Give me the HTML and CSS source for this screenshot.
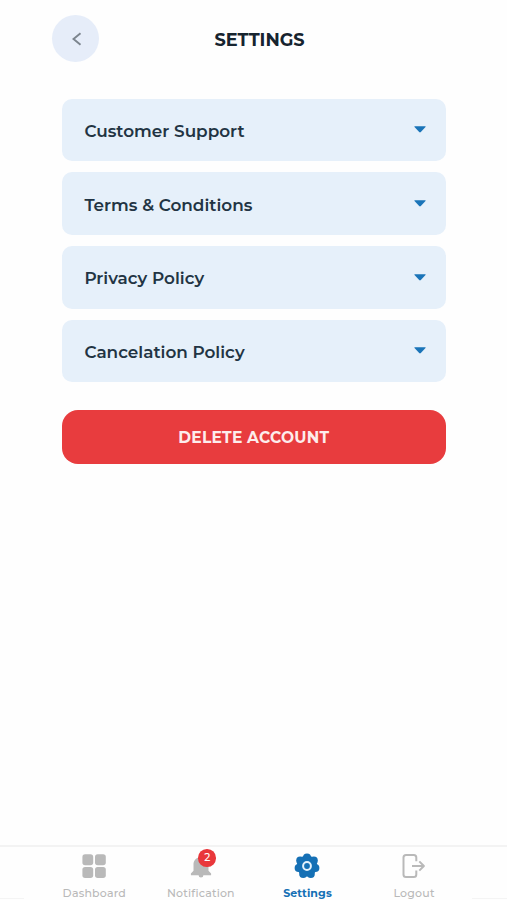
FILE: index.html
```html
<!DOCTYPE html>
<html lang="en">
<head>
<meta charset="utf-8">
<title>Settings</title>
<link rel="stylesheet" href="styles.css">
</head>
<body>
<div class="screen">
  <header class="header">
    <button class="back" aria-label="Back"><svg width="10" height="14" viewBox="0 0 10 14"><path d="M8.5 1.2 1.5 7l7 5.8" fill="none" stroke="#7c858e" stroke-width="1.9"/></svg></button>
    <h1 class="title">SETTINGS</h1>
  </header>
  <main class="content">
    <section class="list">
      <div class="card"><span>Customer Support</span><svg class="caret" viewBox="0 0 12 7"><path d="M.8.3h10.4q.8 0 .3.7L6.8 6.1q-.8.8-1.6 0L.5 1Q0 .3.8.3z"/></svg></div>
      <div class="card"><span>Terms &amp; Conditions</span><svg class="caret" viewBox="0 0 12 7"><path d="M.8.3h10.4q.8 0 .3.7L6.8 6.1q-.8.8-1.6 0L.5 1Q0 .3.8.3z"/></svg></div>
      <div class="card"><span>Privacy Policy</span><svg class="caret" viewBox="0 0 12 7"><path d="M.8.3h10.4q.8 0 .3.7L6.8 6.1q-.8.8-1.6 0L.5 1Q0 .3.8.3z"/></svg></div>
      <div class="card"><span>Cancelation Policy</span><svg class="caret" viewBox="0 0 12 7"><path d="M.8.3h10.4q.8 0 .3.7L6.8 6.1q-.8.8-1.6 0L.5 1Q0 .3.8.3z"/></svg></div>
    </section>
    <button class="delete"><span>DELETE ACCOUNT</span></button>
  </main>
  <nav class="nav">
    <a class="item"><svg width="26" height="26" viewBox="0 0 26 26" fill="#b9b9b9"><rect x="1.4" y="1.2" width="10.8" height="11" rx="2.7"/><rect x="14" y="1.2" width="10.8" height="11" rx="2.7"/><rect x="1.4" y="13.9" width="10.8" height="11" rx="2.7"/><rect x="14" y="13.9" width="10.8" height="11" rx="2.7"/></svg><span>Dashboard</span></a>
    <a class="item"><span class="bell"><svg width="26" height="26" viewBox="0 0 26 26" fill="#b9b9b9"><path d="M11.3 4.3a1.7 1.7 0 0 1 3.4 0c3.9.8 5.8 3.8 5.8 7.4v6.1l2.6 2.8v1.6H2.9v-1.6l2.6-2.8v-6.1c0-3.6 1.9-6.6 5.8-7.4zM10.6 22.2h4.8a2.4 2.4 0 0 1-4.8 0z"/></svg><b class="badge">2</b></span><span>Notification</span></a>
    <a class="item active"><svg width="26" height="26" viewBox="0 0 26 26"><g fill="#1570b5"><circle cx="13" cy="13" r="10.4"/><circle cx="13" cy="4.5" r="4"/><circle cx="19.8" cy="7.6" r="4"/><circle cx="21.4" cy="14.9" r="4"/><circle cx="16.8" cy="20.9" r="4"/><circle cx="9.2" cy="20.9" r="4"/><circle cx="4.6" cy="14.9" r="4"/><circle cx="6.2" cy="7.6" r="4"/></g><circle cx="13" cy="13" r="3.9" fill="none" stroke="#e4f2fc" stroke-width="2"/></svg><span>Settings</span></a>
    <a class="item"><svg width="26" height="26" viewBox="0 0 26 26" fill="none" stroke="#b9b9b9" stroke-width="2" stroke-linejoin="round"><path d="M15.3 8.2V4.6q0-2.5-2.5-2.5H5q-2.5 0-2.5 2.5v16.8q0 2.5 2.5 2.5h7.8q2.5 0 2.5-2.5v-3.8M11 13h11.5M18.3 8.4l4.6 4.6-4.6 4.6"/></svg><span>Logout</span></a>
  </nav>
</div>
</body>
</html>
```
FILE: styles.css
```css
* { box-sizing: border-box; }
body { margin: 0; background: #fefefe; font-family: Montserrat, Inter, sans-serif; }
button { border: 0; padding: 0; font-family: inherit; }
svg { display: block; flex: none; }
.screen { height: 900px; display: flex; flex-direction: column; overflow: hidden; }
.header { height: 98.5px; padding: 15px 52px 0; display: grid; grid-template-columns: 47px 1fr 35px; align-items: start; }
.back { width: 47px; height: 47px; padding-left: 2px; border-radius: 50%; background: #e6edf9; display: flex; align-items: center; justify-content: center; }
.title { margin: 0; line-height: 50px; font-size: 17.7px; font-weight: 700; color: #17242f; text-align: center; white-space: nowrap; }
.content { flex: 1; padding: 0 61.5px 0 62px; }
.list { display: flex; flex-direction: column; gap: 11.2px; }
.card { height: 62.6px; border-radius: 10px; background: #e6f0fa; padding: 2px 19.5px 0 22.4px; display: flex; align-items: center; justify-content: space-between; font-size: 16.85px; font-weight: 600; color: #223443; }
.card span { white-space: nowrap; }
.caret { width: 12px; height: 7px; margin-top: -2.6px; fill: #1a74b8; }
.delete { display: flex; align-items: center; justify-content: center; width: 100%; height: 54px; margin-top: 27.4px; padding-top: 2px; border-radius: 16px; background: #e83c3e; color: #fdecec; font-size: 15.5px; font-weight: 700; letter-spacing: .22px; }
.nav { height: 55px; border-top: 2px solid #f3f3f3; padding: 6px 41px 0; display: grid; grid-template-columns: repeat(4, 106.6px); background: linear-gradient(#f4f4f4, #f4f4f4) 0 51px / 24px 1px no-repeat, linear-gradient(#f4f4f4, #f4f4f4) 100% 51px / 35px 1px no-repeat; }
.item { display: flex; flex-direction: column; align-items: center; font-size: 11px; font-weight: 500; letter-spacing: .2px; color: #b9b9b9; }
.item > span:last-child { line-height: 16px; margin-top: 6px; white-space: nowrap; }
.item.active { color: #1570b5; font-weight: 700; letter-spacing: .1px; }
.bell { position: relative; }
.badge { position: absolute; left: 10.5px; top: -4px; width: 17.5px; height: 17.5px; border-radius: 50%; background: #e9373b; color: #fff; font-size: 10.5px; line-height: 18px; font-weight: 500; text-align: center; letter-spacing: 0; }
```
